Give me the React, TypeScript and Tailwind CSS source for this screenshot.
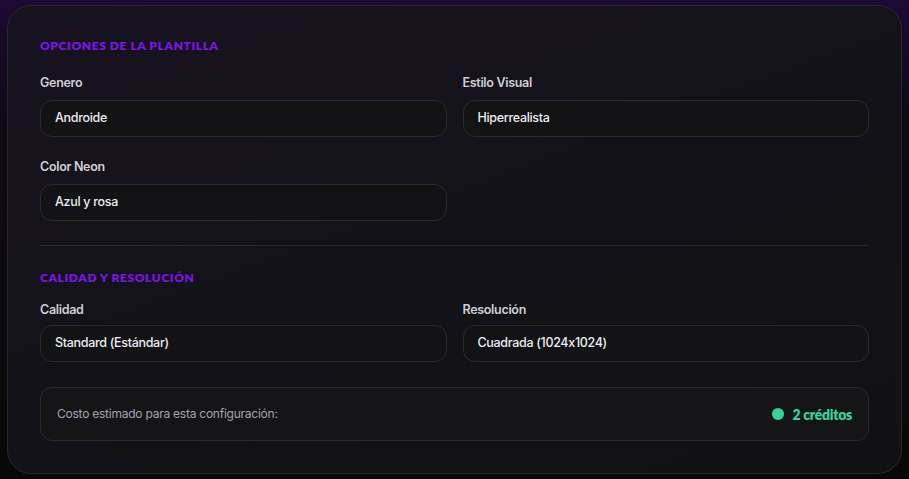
const FONT = "font-['Inter','Liberation_Sans',sans-serif]";

type Field = { label: string; value: string; tight?: boolean };

const SelectBox = ({ label, value, tight }: Field) => (
  <div className="flex flex-col">
    <span
      className={`${tight ? "mb-[5px]" : "mb-[7px]"} text-[12.5px] font-semibold leading-5 tracking-[-0.025em] text-[#cfcfd4]`}
    >
      {label}
    </span>
    <div className="flex h-[37px] items-center rounded-xl border border-[#2a2a2f] bg-[#131316] px-[14px] text-[12.5px] font-medium tracking-[-0.025em] text-[#ececf0]">
      {value}
    </div>
  </div>
);

const SectionTitle = ({ children }: { children: string }) => (
  <h3 className="font-['Lato','Inter',sans-serif] text-[12px] font-extrabold uppercase leading-4 tracking-[0.05em] text-[#7d14ec]">
    {children}
  </h3>
);

export default function App() {
  return (
    <div
      className={`${FONT} min-h-[479px] w-full bg-[linear-gradient(180deg,#1c0935_0px,#0e0a14_120px,#080808_479px)] px-[7px] pt-[5px] pb-[6px]`}
    >
      {/* tarjeta de opciones */}
      <div className="rounded-[24px] border border-[#29272e] bg-[linear-gradient(160deg,#17131f_0%,#141219_45%,#111113_100%)] px-8 pt-8 pb-8">
        <SectionTitle>Opciones de la plantilla</SectionTitle>

        <div className="mt-[19px] grid grid-cols-2 gap-x-4 gap-y-5">
          <SelectBox label="Genero" value="Androide" />
          <SelectBox label="Estilo Visual" value="Hiperrealista" />
          <SelectBox label="Color Neon" value="Azul y rosa" />
        </div>

        <div className="mt-6 h-px bg-[#2a282f]" />

        <div className="mt-6">
          <SectionTitle>Calidad y resolución</SectionTitle>
        </div>

        <div className="mt-[14px] grid grid-cols-2 gap-x-4">
          <SelectBox tight label="Calidad" value="Standard (Estándar)" />
          <SelectBox tight label="Resolución" value="Cuadrada (1024x1024)" />
        </div>

        {/* costo estimado */}
        <div className="mt-[25px] flex h-[54px] items-center justify-between rounded-xl border border-[#29292e] bg-[#151518] px-4">
          <span className="text-[12px] tracking-[-0.02em] text-[#a3a3aa]">Costo estimado para esta configuración:</span>
          <div className="flex items-center gap-2">
            <span className="h-3 w-3 rounded-full bg-[#34d399]" />
            <span className="font-['Lato','Inter',sans-serif] text-[14px] font-extrabold tracking-[-0.02em] text-[#34d399]">2 créditos</span>
          </div>
        </div>
      </div>
    </div>
  );
}
